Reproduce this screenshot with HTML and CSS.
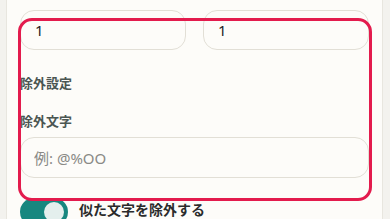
FILE: index.html
```html
<!DOCTYPE html>
<html lang="ja">
<head>
    <meta charset="UTF-8">
    <meta name="viewport" content="width=device-width, initial-scale=1.0">
    <title>除外設定</title>
    <link rel="stylesheet" href="styles.css">
</head>
<body>
    <div class="panel">
        <div class="field__row">
            <div class="field">
                <label class="field__label">最小文字数</label>
                <input class="field__input" type="text" value="1">
            </div>
            <div class="field">
                <label class="field__label">最大文字数</label>
                <input class="field__input" type="text" value="1">
            </div>
        </div>

        <h3 class="section__title">除外設定</h3>

        <label class="sub__label">除外文字</label>
        <input class="field__input field__input--wide" type="text" placeholder="例: @%OO">

        <div class="toggle__row">
            <span class="toggle"><span class="toggle__knob"></span></span>
            <span class="toggle__text">似た文字を除外する</span>
        </div>
    </div>

    <!-- 강조 표시 -->
    <div class="highlight"></div>
</body>
</html>
```

FILE: styles.css
```css
* {
    margin: 0;
    padding: 0;
    box-sizing: border-box;
}
body {
    background-color: #f3f2ee;
    font-family: "Noto Sans", "Noto Sans CJK JP", sans-serif;
    overflow: hidden;
    height: 219px;
}
.panel {
    width: 377px;
    margin-left: 6px;
    margin-top: -14px;
    padding: 0 13px 20px;
    background-color: #fdfcf9;
    border-left: 1px solid #e8e6df;
    border-right: 1px solid #e8e6df;
    min-height: 260px;
}
.field__row {
    display: grid;
    grid-template-columns: 1fr 1fr;
    gap: 17px;
}
.field__label {
    display: block;
    font-size: 12px;
    line-height: 16px;
    color: #b3b1a9;
    margin-bottom: 8px;
}
.field__input {
    display: block;
    width: 100%;
    height: 40px;
    padding: 0 14px;
    border: 1px solid #e2dfd6;
    border-radius: 14px;
    background-color: #fdfcf9;
    font-family: "Noto Sans", "Noto Sans CJK JP", sans-serif;
    font-size: 15px;
    color: #1e1e1e;
    outline: none;
}
.field__input--wide {
    height: 41px;
    padding: 0 13px;
    margin-top: 7px;
}
.field__input::placeholder {
    color: #8a8a86;
}
.section__title {
    margin-top: 24px;
    font-size: 13px;
    line-height: 18px;
    font-weight: 700;
    color: #4b5652;
}
.sub__label {
    display: block;
    margin-top: 20px;
    font-size: 13px;
    line-height: 18px;
    font-weight: 700;
    color: #4b5652;
}
.toggle__row {
    display: flex;
    align-items: center;
    gap: 11px;
    margin-top: 20px;
}
.toggle {
    display: flex;
    align-items: center;
    justify-content: flex-end;
    width: 48px;
    height: 28px;
    padding: 0 4px;
    border-radius: 14px;
    background-color: #17877f;
}
.toggle__knob {
    width: 20px;
    height: 20px;
    border-radius: 50%;
    background-color: #e4efed;
}
.toggle__text {
    font-size: 14px;
    line-height: 16px;
    margin-bottom: 4px;
    font-weight: 700;
    color: #2b2b2b;
}
.highlight {   /* 빨간 강조 박스 */
    position: absolute;
    left: 18px;
    top: 18px;
    width: 354px;
    height: 183px;
    border: 3px solid #e31b4d;
    border-radius: 14px;
    pointer-events: none;
}
```
